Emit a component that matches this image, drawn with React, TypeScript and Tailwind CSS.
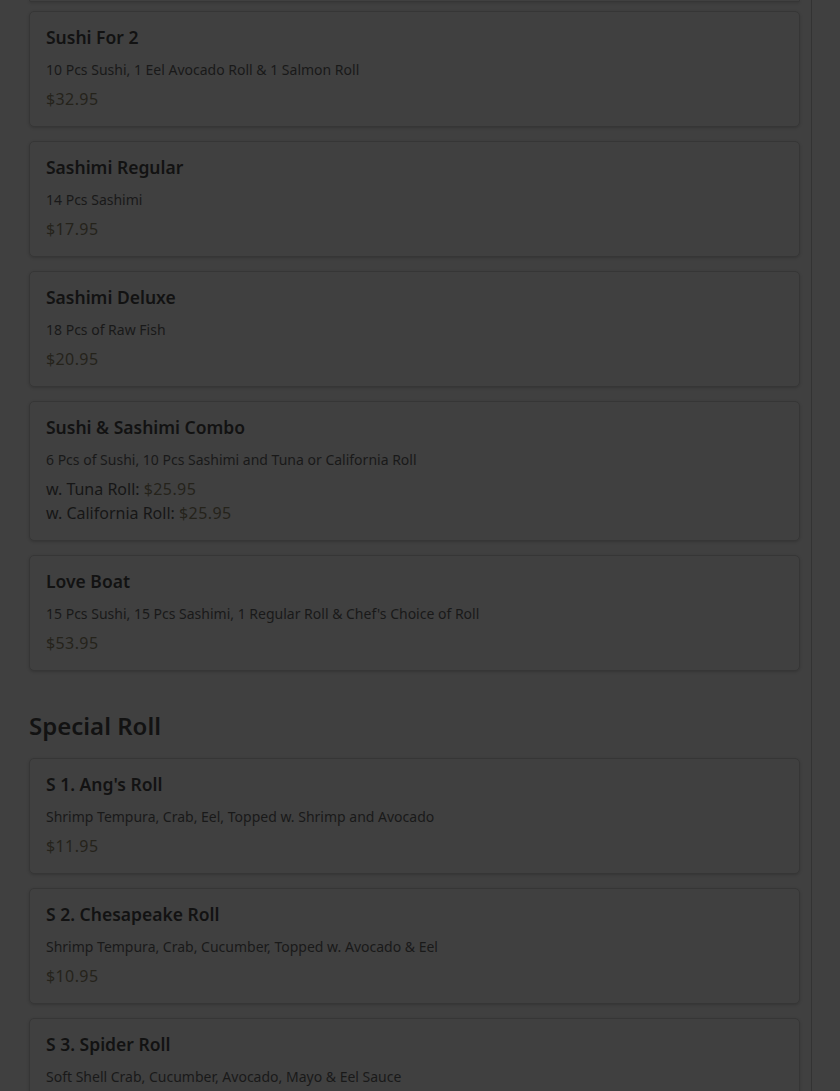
type Item = {
  name: string;
  desc: string;
  price?: string;
  options?: { label: string; price: string }[];
};

const combos: Item[] = [
  { name: "Sushi For 2", desc: "10 Pcs Sushi, 1 Eel Avocado Roll & 1 Salmon Roll", price: "$32.95" },
  { name: "Sashimi Regular", desc: "14 Pcs Sashimi", price: "$17.95" },
  { name: "Sashimi Deluxe", desc: "18 Pcs of Raw Fish", price: "$20.95" },
  {
    name: "Sushi & Sashimi Combo",
    desc: "6 Pcs of Sushi, 10 Pcs Sashimi and Tuna or California Roll",
    options: [
      { label: "w. Tuna Roll:", price: "$25.95" },
      { label: "w. California Roll:", price: "$25.95" },
    ],
  },
  { name: "Love Boat", desc: "15 Pcs Sushi, 15 Pcs Sashimi, 1 Regular Roll & Chef's Choice of Roll", price: "$53.95" },
];

const specials: Item[] = [
  { name: "S 1. Ang's Roll", desc: "Shrimp Tempura, Crab, Eel, Topped w. Shrimp and Avocado", price: "$11.95" },
  { name: "S 2. Chesapeake Roll", desc: "Shrimp Tempura, Crab, Cucumber, Topped w. Avocado & Eel", price: "$10.95" },
  { name: "S 3. Spider Roll", desc: "Soft Shell Crab, Cucumber, Avocado, Mayo & Eel Sauce" },
];

const MenuCard = ({ item }: { item: Item }) => {
  return (
    <div className="border border-[#363636] rounded-[5px] shadow-[0_1px_3px_rgba(0,0,0,0.18)] px-4 pt-[11px] pb-[15px]">
      <h3 className="text-[17.5px] leading-7 font-semibold text-[#121212]">{item.name}</h3>
      <p className="mt-[9px] mb-[-1px] text-[14px] leading-5 text-[#191919]">{item.desc}</p>
      {item.price && <p className="mt-2 text-[16px] leading-6 tracking-wide text-[#25231b]">{item.price}</p>}
      {item.options && (
        <div className="mt-2">
          {item.options.map((o) => (
            <p key={o.label} className="text-[16px] leading-6 text-[#161616]">
              {o.label} <span className="tracking-wide text-[#25231b]">{o.price}</span>
            </p>
          ))}
        </div>
      )}
    </div>
  );
};

const App = () => {
  return (
    <div className="h-[1091px] overflow-hidden bg-[#404040] flex font-['Noto_Sans',sans-serif]">
      <div className="w-[812px] shrink-0 border-r border-[#333333] pl-[29px] pr-[11px]">
        {/* bottom edge of the card scrolled out above */}
        <div className="h-[2px] border-x border-b border-[#363636] rounded-b-[5px] shadow-[0_1px_3px_rgba(0,0,0,0.18)]"></div>

        <div className="mt-[9px] flex flex-col gap-[14px]">
          {combos.map((c) => (
            <MenuCard key={c.name} item={c} />
          ))}
        </div>

        <h2 className="mt-[39px] mb-4 text-[24px] leading-8 font-semibold text-[#121212]">Special Roll</h2>

        <div className="flex flex-col gap-[14px]">
          {specials.map((s) => (
            <MenuCard key={s.name} item={s} />
          ))}
        </div>
      </div>
      <div className="flex-1 bg-[#404040]"></div>
    </div>
  );
};

export default App;
